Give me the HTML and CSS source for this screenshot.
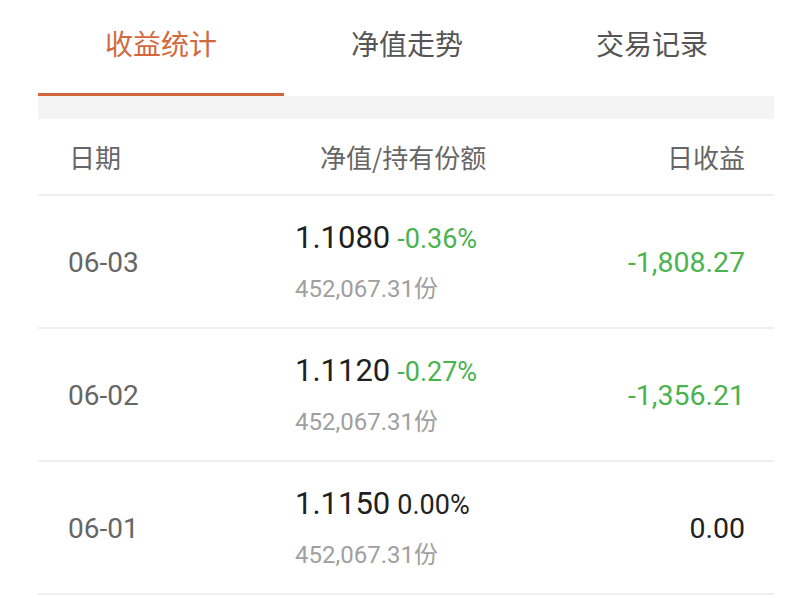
FILE: index.html
```html
<!DOCTYPE html>
<html lang="zh-CN">
<head>
<meta charset="utf-8">
<title>收益统计</title>
<link rel="stylesheet" href="styles.css">
</head>
<body>
<div class="page">
  <nav class="tabs">
    <div class="tab active">收益统计</div>
    <div class="tab">净值走势</div>
    <div class="tab">交易记录</div>
  </nav>
  <div class="band"></div>
  <div class="row head">
    <div class="c-date">日期</div>
    <div class="c-mid head-mid">净值/持有份额</div>
    <div class="c-gain">日收益</div>
  </div>
  <div class="row item">
    <div class="c-date date">06-03</div>
    <div class="c-mid">
      <div class="nav"><span class="nv">1.1080</span> <span class="pct down">-0.36%</span></div>
      <div class="share">452,067.31份</div>
    </div>
    <div class="c-gain gain down">-1,808.27</div>
  </div>
  <div class="row item">
    <div class="c-date date">06-02</div>
    <div class="c-mid">
      <div class="nav"><span class="nv">1.1120</span> <span class="pct down">-0.27%</span></div>
      <div class="share">452,067.31份</div>
    </div>
    <div class="c-gain gain down">-1,356.21</div>
  </div>
  <div class="row item">
    <div class="c-date date">06-01</div>
    <div class="c-mid">
      <div class="nav"><span class="nv">1.1150</span> <span class="pct flat">0.00%</span></div>
      <div class="share">452,067.31份</div>
    </div>
    <div class="c-gain gain flat">0.00</div>
  </div>
</div>
</body>
</html>
```
FILE: styles.css
```css
html, body {
  margin: 0;
  padding: 0;
  background: #ffffff;
}
body {
  font-family: Roboto, "Noto Sans CJK SC", sans-serif;
  color: #222;
}
.page {
  width: 736px;
  margin-left: 38px;
}
.tabs {
  display: grid;
  grid-template-columns: 246px 246px 244px;
  height: 96px;
}
.tab {
  display: flex;
  align-items: center;
  justify-content: center;
  padding-bottom: 7px;
  box-sizing: border-box;
  border-bottom: 3px solid transparent;
  font-family: "Noto Sans CJK SC", sans-serif;
  font-size: 28px;
  color: #555;
}
.tab.active {
  color: #d2693e;
  border-bottom-color: #d4643a;
}
.band {
  height: 23px;
  background: #f4f4f4;
}
.row {
  display: grid;
  grid-template-columns: 257px 1fr auto;
  align-items: center;
  border-bottom: 2px solid #efefef;
  box-sizing: border-box;
}
.head {
  height: 77px;
  font-family: "Noto Sans CJK SC", sans-serif;
  font-size: 26px;
  color: #666;
}
.c-date {
  padding-left: 30px;
}
.head .c-date {
  padding-left: 31px;
}
.head-mid {
  padding-left: 25px;
}
.c-gain {
  padding-right: 29px;
  text-align: right;
}
.item {
  height: 133px;
}
.date {
  font-size: 28px;
  color: #666;
  padding-top: 2px;
}
.nav {
  line-height: 36px;
  white-space: nowrap;
}
.nv {
  font-size: 31px;
  color: #1f1f1f;
}
.pct {
  font-size: 27px;
  margin-left: 3px;
}
.share {
  margin-top: 13px;
  line-height: 30px;
  font-size: 24px;
  color: #a0a0a0;
}
.gain {
  font-size: 28.5px;
  padding-top: 2px;
}
.down {
  color: #4ab350;
}
.flat {
  color: #222;
}
```
